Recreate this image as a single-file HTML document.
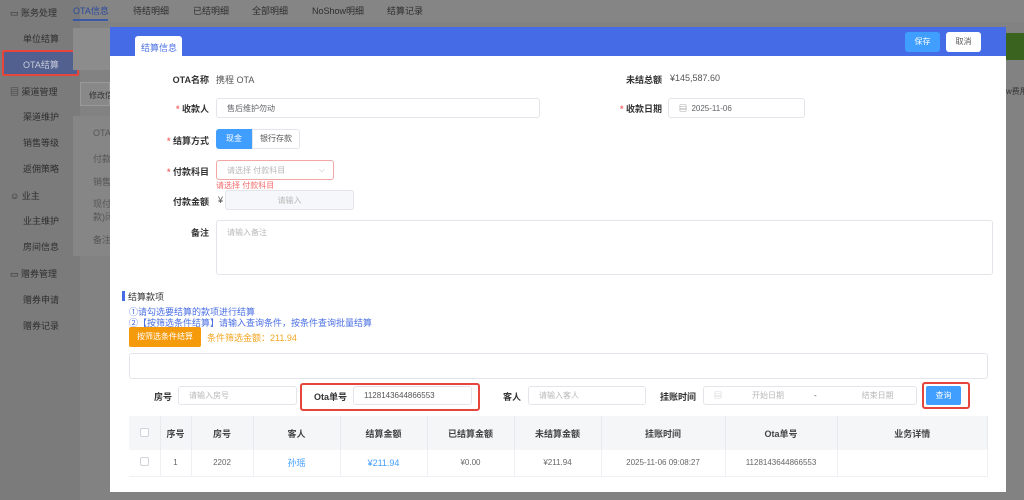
<!DOCTYPE html>
<html><head><meta charset="utf-8"><style>
*{margin:0;padding:0;box-sizing:border-box}
body{width:1024px;height:500px;overflow:hidden;background:#828282;font-family:"Liberation Sans","Noto Sans CJK SC",sans-serif;font-size:9px;color:#333;position:relative}
.a{position:absolute;white-space:nowrap}
.side{left:0;top:0;width:80px;height:500px;background:#7b7b7b}
.st{color:#2e2e2e;font-size:9px}
.inp{position:absolute;border:1px solid #e3e5ea;border-radius:3px;background:#fff;color:#b8b8b8;font-size:8px;padding-left:10px;display:flex;align-items:center}
.lbl{position:absolute;font-size:9px;color:#333;font-weight:bold;text-align:right;white-space:nowrap}
.req:before{content:"* ";color:#f56c6c}
.red{position:absolute;border:2px solid #e5453a;border-radius:3px}
table{position:absolute;left:129px;top:416px;width:859px;border-collapse:collapse;font-size:8px}
th{height:34px;background:#f5f6f8;color:#444;font-weight:bold;font-size:9px;border-right:1px solid #e8eaee}
td{height:26px;text-align:center;color:#666;border-right:1px solid #eef0f3;border-bottom:1px solid #eef0f3}
.cb{display:inline-block;width:9px;height:9px;border:1px solid #d0d3d9;border-radius:2px;background:#fff}
</style></head><body>
<div class="a side"></div>
<div class="a st" style="left:10px;top:6px">▭ 账务处理</div>
<div class="a st" style="left:23px;top:32px">单位结算</div>
<div class="a" style="left:2px;top:50px;width:77px;height:26px;background:#52608f;border:2px solid #e5453a;border-radius:2px"></div>
<div class="a" style="left:23px;top:58px;color:#c8cbd8">OTA结算</div>
<div class="a st" style="left:10px;top:85px">▤ 渠道管理</div>
<div class="a st" style="left:23px;top:110px">渠道维护</div>
<div class="a st" style="left:23px;top:136px">销售等级</div>
<div class="a st" style="left:23px;top:162px">返佣策略</div>
<div class="a st" style="left:10px;top:189px">☺ 业主</div>
<div class="a st" style="left:23px;top:214px">业主维护</div>
<div class="a st" style="left:23px;top:240px">房间信息</div>
<div class="a st" style="left:10px;top:267px">▭ 赠券管理</div>
<div class="a st" style="left:23px;top:293px">赠券申请</div>
<div class="a st" style="left:23px;top:319px">赠券记录</div>
<div class="a" style="left:80px;top:0;width:944px;height:22px;background:#858585"></div>
<div class="a" style="left:73px;top:4px;color:#2a4a9a;font-size:9px">OTA信息</div>
<div class="a" style="left:73px;top:19px;width:35px;height:2px;background:#3a5aa8"></div>
<div class="a st" style="left:133px;top:4px">待结明细</div>
<div class="a st" style="left:193px;top:4px">已结明细</div>
<div class="a st" style="left:252px;top:4px">全部明细</div>
<div class="a st" style="left:312px;top:4px">NoShow明细</div>
<div class="a st" style="left:387px;top:4px">结算记录</div>
<div class="a" style="left:73px;top:28px;width:40px;height:42px;background:#8c8c8c"></div>
<div class="a" style="left:80px;top:82px;width:30px;height:24px;border:1px solid #999;background:#888;color:#333;font-size:8px;padding:7px 0 0 8px">修改信</div>
<div class="a" style="left:73px;top:116px;width:40px;height:140px;background:#868686"></div>
<div class="a st" style="left:93px;top:128px;color:#555">OTA</div>
<div class="a st" style="left:93px;top:152px;color:#555">付款</div>
<div class="a st" style="left:93px;top:175px;color:#555">销售</div>
<div class="a st" style="left:93px;top:197px;color:#555">现付<br>款)闭</div>
<div class="a st" style="left:93px;top:233px;color:#555">备注</div>
<div class="a" style="left:1006px;top:33px;width:18px;height:27px;background:#3b6320"></div>
<div class="a" style="left:1006px;top:86px;color:#333;font-size:8px">w费用</div>

<div class="a" style="left:110px;top:27px;width:896px;height:465px;background:#fff"></div>
<div class="a" style="left:110px;top:27px;width:896px;height:29px;background:#456be6"></div>
<div class="a" style="left:135px;top:36px;width:47px;height:20px;background:#fff;border-radius:3px 3px 0 0;color:#4a6fe3;font-size:9px;padding:5px 0 0 6px">结算信息</div>
<div class="a" style="left:905px;top:32px;width:35px;height:20px;background:#409eff;border-radius:3px;color:#fff;font-size:8px;text-align:center;line-height:20px">保存</div>
<div class="a" style="left:946px;top:32px;width:35px;height:20px;background:#fff;border-radius:3px;color:#555;font-size:8px;text-align:center;line-height:20px">取消</div>

<div class="lbl" style="right:815px;top:73px">OTA名称</div>
<div class="a" style="left:216px;top:73px;color:#555">携程 OTA</div>
<div class="lbl req" style="right:815px;top:102px">收款人</div>
<div class="inp" style="left:216px;top:98px;width:324px;height:20px;color:#606266">售后维护勿动</div>
<div class="lbl req" style="right:815px;top:134px">结算方式</div>
<div class="a" style="left:216px;top:129px;width:36px;height:20px;background:#409eff;color:#fff;font-size:8px;text-align:center;line-height:20px;border-radius:3px 0 0 3px">现金</div>
<div class="a" style="left:252px;top:129px;width:48px;height:20px;border:1px solid #e3e5ea;color:#555;font-size:8px;text-align:center;line-height:18px;border-radius:0 3px 3px 0">银行存款</div>
<div class="lbl req" style="right:815px;top:165px">付款科目</div>
<div class="inp" style="left:216px;top:160px;width:118px;height:20px;border-color:#f3a6a6">请选择 付款科目<span style="position:absolute;right:8px;color:#bbb">⌵</span></div>
<div class="a" style="left:216px;top:180px;color:#f56c6c;font-size:8px">请选择 付款科目</div>
<div class="lbl" style="right:815px;top:195px">付款金额</div>
<div class="a" style="left:218px;top:195px;color:#555">¥</div>
<div class="inp" style="left:225px;top:190px;width:129px;height:20px;background:#f5f7fa;justify-content:center;padding:0">请输入</div>
<div class="lbl" style="right:815px;top:226px">备注</div>
<div class="inp" style="left:216px;top:220px;width:777px;height:55px;align-items:flex-start;padding-top:6px">请输入备注</div>

<div class="lbl" style="right:362px;top:73px">未结总额</div>
<div class="a" style="left:670px;top:73px;color:#555">¥145,587.60</div>
<div class="lbl req" style="right:362px;top:102px">收款日期</div>
<div class="inp" style="left:668px;top:98px;width:137px;height:20px;color:#606266">▤ &nbsp;2025-11-06</div>

<div class="a" style="left:122px;top:291px;width:3px;height:10px;background:#456be6"></div>
<div class="a" style="left:128px;top:290px;color:#333;font-size:9px">结算款项</div>
<div class="a" style="left:129px;top:305px;color:#4a6fe3;font-size:9px">①请勾选要结算的款项进行结算</div>
<div class="a" style="left:129px;top:316px;color:#4a6fe3;font-size:9px">②【按筛选条件结算】请输入查询条件，按条件查询批量结算</div>
<div class="a" style="left:129px;top:327px;width:72px;height:20px;background:#f59a0a;color:#fff;font-size:8px;text-align:center;line-height:20px;border-radius:2px">按筛选条件结算</div>
<div class="a" style="left:207px;top:331px;color:#f5a623;font-size:9px">条件筛选金额：211.94</div>
<div class="a" style="left:129px;top:353px;width:859px;height:26px;border:1px solid #e3e5ea;border-radius:3px"></div>

<div class="lbl" style="left:154px;top:390px">房号</div>
<div class="inp" style="left:178px;top:386px;width:119px;height:19px">请输入房号</div>
<div class="red" style="left:300px;top:383px;width:180px;height:28px"></div>
<div class="lbl" style="left:314px;top:390px">Ota单号</div>
<div class="inp" style="left:353px;top:386px;width:119px;height:19px;color:#555">1128143644866553</div>
<div class="lbl" style="left:503px;top:390px">客人</div>
<div class="inp" style="left:528px;top:386px;width:118px;height:19px">请输入客人</div>
<div class="lbl" style="left:660px;top:390px">挂账时间</div>
<div class="inp" style="left:703px;top:386px;width:214px;height:19px">▤<span style="margin-left:30px">开始日期</span><span style="margin-left:30px;color:#555">-</span><span style="margin-left:45px">结束日期</span></div>
<div class="red" style="left:922px;top:382px;width:48px;height:27px"></div>
<div class="a" style="left:926px;top:386px;width:35px;height:19px;background:#409eff;color:#fff;font-size:8px;text-align:center;line-height:19px;border-radius:2px">查询</div>

<table>
<tr><th style="width:31px"><span class="cb"></span></th><th style="width:31px">序号</th><th style="width:62px">房号</th><th style="width:87px">客人</th><th style="width:87px">结算金额</th><th style="width:87px">已结算金额</th><th style="width:87px">未结算金额</th><th style="width:124px">挂账时间</th><th style="width:112px">Ota单号</th><th>业务详情</th></tr>
<tr><td><span class="cb"></span></td><td>1</td><td>2202</td><td style="color:#409eff;font-size:9px">孙瑶</td><td style="color:#409eff;font-size:9px">¥211.94</td><td>¥0.00</td><td>¥211.94</td><td>2025-11-06 09:08:27</td><td>1128143644866553</td><td></td></tr>
</table>
</body></html>
